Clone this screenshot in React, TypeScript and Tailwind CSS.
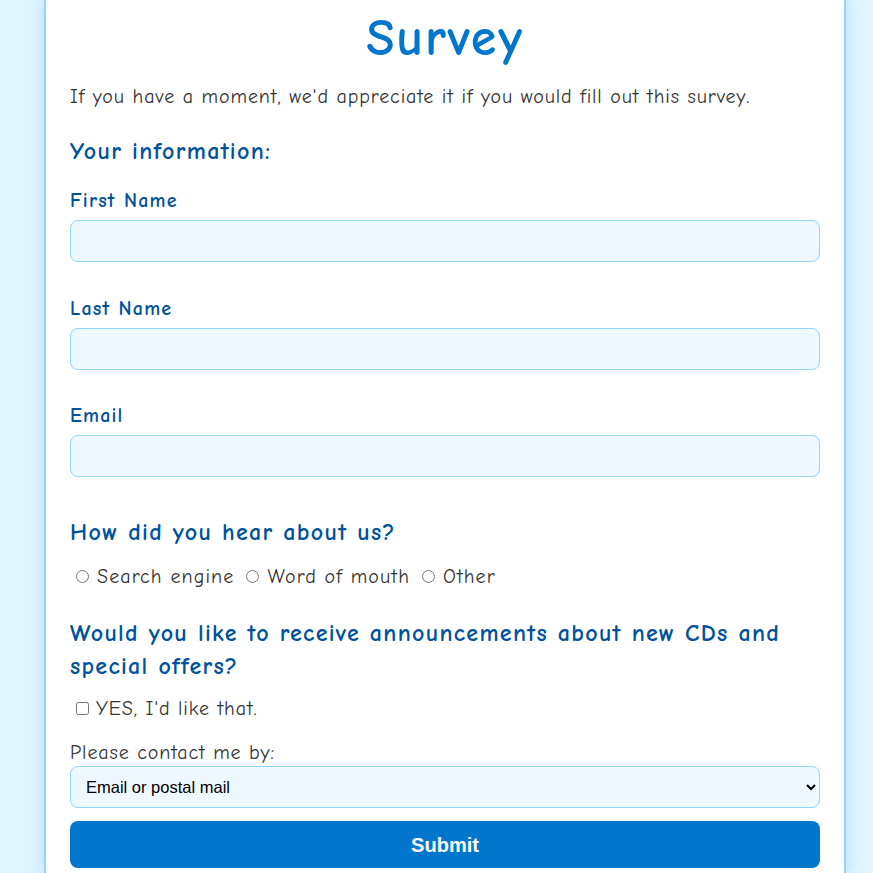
const comic = "font-['Comic_Sans_MS','Comic_Neue','DejaVu_Sans',sans-serif]"

const Field = ({ label, id }: { label: string; id: string }) => (
  <div className="mt-[32.5px] first:mt-[19px]">
    <label
      htmlFor={id}
      className="block text-[20px] leading-[27px] font-bold tracking-[1.2px] text-[#00529b]"
    >
      {label}
    </label>
    <input
      id={id}
      type="text"
      className="mt-[6px] block h-[42px] w-full rounded-[8px] border border-[#90d5ff] bg-[#f0f8ff] px-3 outline-none"
    />
  </div>
)

export default function App() {
  return (
    <div className="min-h-[873px] bg-[#dff4ff]">
      <div
        className={`${comic} ml-[44px] min-h-[873px] w-[802px] border-x-2 border-[#90d5ff] bg-white px-[24px] text-[#333] shadow-[0_0_14px_rgba(80,180,255,0.35)]`}
      >
        <h1 className="pt-[9px] text-center text-[52px] leading-[58px] font-bold tracking-[1.8px] text-[#0077cc]">
          Survey
        </h1>
        <p className="mt-[16px] text-[20px] leading-[27px] tracking-[0.9px]">
          If you have a moment, we'd appreciate it if you would fill out this
          survey.
        </p>

        <h2 className="mt-[25px] text-[24px] leading-[33px] font-bold tracking-[1.3px] text-[#00529b]">
          Your information:
        </h2>
        <div>
          <Field label="First Name" id="first" />
          <Field label="Last Name" id="last" />
          <Field label="Email" id="email" />
        </div>

        <h2 className="mt-[39px] text-[24px] leading-[33px] font-bold tracking-[1.3px] text-[#00529b]">
          How did you hear about us?
        </h2>
        <div className="mt-[14px] flex items-center text-[20px] leading-[27px] tracking-[1.1px]">
          {['Search engine', 'Word of mouth', 'Other'].map((o) => (
            <label key={o} className="mr-[6px] flex items-center">
              <input
                type="radio"
                name="source"
                className="mr-[8px] ml-[6px] h-[13px] w-[13px]"
              />
              {o}
            </label>
          ))}
        </div>

        <h2 className="mt-[27px] text-[24px] leading-[33px] font-bold tracking-[1.3px] text-[#00529b]">
          Would you like to receive announcements about new CDs and special
          offers?
        </h2>
        <label className="mt-[12px] flex items-center text-[20px] leading-[27px] tracking-[0.9px]">
          <input
            type="checkbox"
            className="mr-[7px] ml-[6px] h-[13px] w-[13px]"
          />
          YES, I'd like that.
        </label>

        <label
          htmlFor="contact"
          className="mt-[17px] block text-[20px] leading-[27px] tracking-[0.9px]"
        >
          Please contact me by:
        </label>
        <select
          id="contact"
          className="block h-[42px] w-full rounded-[8px] border border-[#90d5ff] bg-[#f0f8ff] pr-[17px] pl-[11px] font-['Liberation_Sans',Arial,sans-serif] text-[16.5px] text-black"
        >
          <option>Email or postal mail</option>
          <option>Email only</option>
          <option>Postal mail only</option>
        </select>
        <button
          type="button"
          className="mt-[13px] mb-[20px] block h-[47px] w-full rounded-[8px] bg-[#0077cc] font-['Liberation_Sans',Arial,sans-serif] text-[20px] font-bold text-white"
        >
          Submit
        </button>
      </div>
    </div>
  )
}
